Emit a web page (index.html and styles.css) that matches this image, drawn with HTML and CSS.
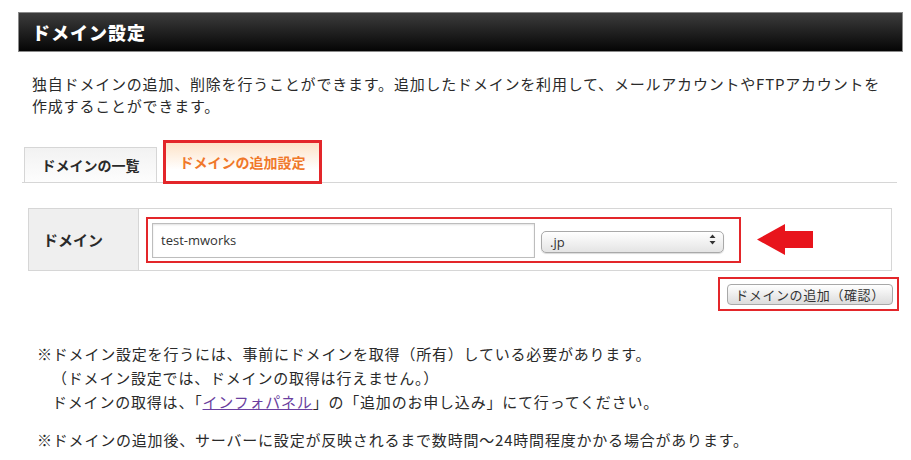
FILE: index.html
```html
<!DOCTYPE html>
<html lang="ja">
<head>
  <meta charset="UTF-8" />
  <title>ドメイン設定</title>
  <meta name="viewport" content="width=device-width, initial-scale=1.0" />
  <link rel="stylesheet" href="styles.css">
</head>
<body>
  <div class="page">
    <h1 class="page-title">ドメイン設定</h1>

    <p class="intro">独自ドメインの追加、削除を行うことができます。追加したドメインを利用して、メールアカウントやFTPアカウントを<br>作成することができます。</p>

    <ul class="tabs">
      <li class="tab">ドメインの一覧</li>
      <li class="tab active">ドメインの追加設定</li>
    </ul>

    <table class="form-table">
      <tr>
        <th>ドメイン</th>
        <td>
          <div class="field-row">
            <div class="mark-box">
              <input class="domain-input" type="text" value="test-mworks">
              <span class="select-wrap">
                <select class="tld-select">
                  <option>.jp</option>
                </select>
                <svg class="select-arrows" width="7" height="11" viewBox="0 0 7 11"><path d="M3.5 0.5 L6.5 4 L0.5 4 Z M3.5 10.5 L6.5 7 L0.5 7 Z" fill="#333"/></svg>
              </span>
            </div>
            <svg class="arrow" width="57" height="31" viewBox="0 0 57 31">
              <path d="M0 15.5 L28 0 L28 7 L56 7 L56 24 L28 24 L28 31 Z" fill="#e8141c"/>
            </svg>
          </div>
        </td>
      </tr>
    </table>

    <div class="actions">
      <div class="mark-box btn-mark">
        <button class="btn">ドメインの追加（確認）</button>
      </div>
    </div>

    <div class="notes">
      <p>※ドメイン設定を行うには、事前にドメインを取得（所有）している必要があります。</p>
      <p class="sub">（ドメイン設定では、ドメインの取得は行えません。）</p>
      <p class="sub">ドメインの取得は、「<a href="#">インフォパネル</a>」の「追加のお申し込み」にて行ってください。</p>
      <p class="gap">※ドメインの追加後、サーバーに設定が反映されるまで数時間〜24時間程度かかる場合があります。</p>
    </div>
  </div>
</body>
</html>
```

FILE: styles.css
```css
:root {
  --text: #2a2a2a;
  --line: #d6d6d6;
  --mark: #e3262a;
  --orange: #f0782a;
}

body {
  margin: 0;
  background: #fff;
  color: var(--text);
  font-family: "Noto Sans CJK JP", "Noto Sans", sans-serif;
}

.page {
  width: 885px;
  padding: 12px 8px 0 18px;
}

.page-title {
  margin: 0;
  height: 38px;
  line-height: 38px;
  padding-left: 13px;
  background: linear-gradient(#3c3c3c, #050505);
  border: 1px solid #8a8a8a;
  color: #fff;
  font-size: 18px;
  font-weight: 900;
  letter-spacing: 1px;
}

.intro {
  margin: 21px 0 0 14px;
  font-size: 15px;
  line-height: 22px;
  letter-spacing: 0.8px;
}

.tabs {
  display: flex;
  list-style: none;
  margin: 26px 6px 0 4px;
  padding: 0 0 0 2px;
  border-bottom: 1px solid var(--line);
  align-items: flex-end;
}

.tab {
  width: 133px;
  height: 35px;
  line-height: 35px;
  text-align: center;
  font-size: 14px;
  font-weight: bold;
  background: linear-gradient(#f2f2f2, #fdfdfd);
  border: 1px solid var(--line);
  border-bottom: none;
  box-sizing: border-box;
}

.tab.active {
  width: 153px;
  height: 38px;
  line-height: 38px;
  margin-left: 9px;
  color: var(--orange);
  background: linear-gradient(#fde3c8, #fff 70%);
  border: none;
  outline: 3px solid var(--mark);
  outline-offset: 0;
  margin-bottom: 1px;
}

.form-table {
  margin: 25px 0 0 10px;
  width: 864px;
  border-collapse: collapse;
  border: 1px solid var(--line);
}

.form-table th {
  width: 110px;
  height: 62px;
  padding: 0 0 0 14px;
  text-align: left;
  background: #efefef;
  border-right: 1px solid var(--line);
  font-size: 15px;
  box-sizing: border-box;
}

.form-table td {
  padding: 0 0 0 7px;
}

.field-row {
  display: flex;
  align-items: center;
}

.mark-box {
  display: flex;
  align-items: center;
  border: 2px solid var(--mark);
  padding: 4px 15px 3px 4px;
}

.domain-input {
  width: 383px;
  height: 35px;
  box-sizing: border-box;
  border: 1px solid #bdbdbd;
  box-shadow: inset 0 1px 2px rgba(0, 0, 0, 0.12);
  padding: 0 8px;
  font-family: "Open Sans", "Noto Sans", sans-serif;
  font-size: 13px;
  color: #333;
}

.select-wrap {
  position: relative;
  margin-left: 6px;
  display: inline-block;
}

.tld-select {
  appearance: none;
  -webkit-appearance: none;
  width: 183px;
  height: 22px;
  padding: 0 8px;
  border: 1px solid #a9a9a9;
  border-radius: 5px;
  background: linear-gradient(#ffffff, #e4e4e4);
  box-shadow: 0 1px 1px rgba(0, 0, 0, 0.15);
  font-family: "Open Sans", "Noto Sans", sans-serif;
  font-size: 13px;
  color: #333;
}

.select-arrows {
  position: absolute;
  right: 8px;
  top: 6px;
}

.arrow {
  margin-left: 16px;
}

.actions {
  display: flex;
  justify-content: flex-end;
  margin: 6px 4px 0 0;
}

.btn-mark {
  padding: 5px 4px 4px 7px;
}

.btn {
  width: 166px;
  height: 21px;
  padding: 0;
  border: 1px solid #a8a8a8;
  border-radius: 4px;
  background: linear-gradient(#ffffff, #dcdcdc);
  font-family: "Noto Sans CJK JP", sans-serif;
  font-size: 13px;
  letter-spacing: 0.6px;
  color: #333;
}

.notes {
  margin: 31px 0 0 19px;
  font-size: 15px;
  letter-spacing: 0.8px;
}

.notes p {
  margin: 0;
  line-height: 24px;
}

.notes .sub {
  padding-left: 15px;
}

.notes .gap {
  margin-top: 14px;
}

.notes a {
  color: #6b3fa0;
}
```
